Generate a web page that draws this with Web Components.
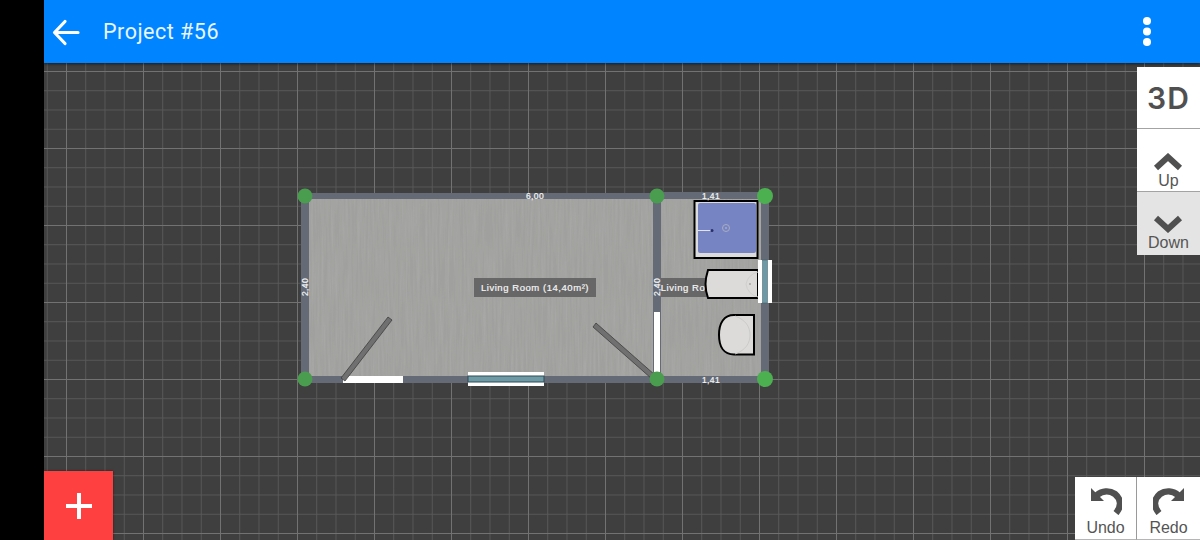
<!DOCTYPE html>
<html>
<head>
<meta charset="utf-8">
<title>Project #56</title>
<style>
html, body { margin: 0; height: 100%; background: #000; overflow: hidden; }
</style>
</head>
<body>
<app-shell>
    <top-bar slot="bar" title="Project #56"></top-bar>
    <plan-canvas>
        <floor-plan></floor-plan>
        <side-tools slot="side">
            <view-button></view-button>
            <tool-button label="Up" icon="up"></tool-button>
            <tool-button label="Down" icon="down" muted></tool-button>
        </side-tools>
        <history-tools slot="history">
            <tool-button label="Undo" icon="undo"></tool-button>
            <tool-button label="Redo" icon="redo"></tool-button>
        </history-tools>
        <add-button slot="add"></add-button>
    </plan-canvas>
</app-shell>

<script>
class AppShell extends HTMLElement {
    constructor() {
        super();
        this.attachShadow({ mode: 'open' }).innerHTML = `
            <style>
            :host {
                background: #000;
                display: grid;
                grid-template-columns: 44px 1fr;
                height: 540px;
                width: 1200px;
            }
            .main {
                display: flex;
                flex-direction: column;
                grid-column: 2;
                min-width: 0;
            }
            </style>
            <div class="main">
                <slot name="bar"></slot>
                <slot></slot>
            </div>
        `;
    }
}

class TopBar extends HTMLElement {
    constructor() {
        super();
        this.attachShadow({ mode: 'open' }).innerHTML = `
            <style>
            :host {
                align-items: center;
                background: #0084ff;
                box-shadow: 0 1px 3px #0009;
                color: #e8f5ff;
                display: flex;
                flex: none;
                font: 21.500px Roboto, sans-serif;
                height: 63px;
                letter-spacing: .5px;
                position: relative;
                z-index: 2;
            }
            .back { display: block; margin-left: 8px; }
            .title { flex: 1; margin-left: 23px; }
            .more { display: block; margin-right: 48px; }
            </style>
            <svg class="back" width="28" height="28" viewBox="0 0 28 28" fill="none" stroke="#fff" stroke-width="3.200" stroke-linecap="round" stroke-linejoin="round">
                <path d="M3 14.500H26M13 3.500L2.500 14.500L13 25.500"/>
            </svg>
            <span class="title"></span>
            <svg class="more" width="10" height="32" viewBox="0 0 10 32" fill="#fff">
                <circle cx="5" cy="5" r="4"/><circle cx="5" cy="15.500" r="4"/><circle cx="5" cy="26" r="4"/>
            </svg>
        `;
        this.shadowRoot.querySelector('.title').textContent = this.getAttribute('title');
    }
}

class PlanCanvas extends HTMLElement {
    constructor() {
        super();
        this.attachShadow({ mode: 'open' }).innerHTML = `
            <style>
            :host {
                background-color: #3f3f40;
                display: block;
                flex: 1;
                overflow: hidden;
                position: relative;
            }
            .grid {
                background-image:
                    linear-gradient(90deg, #727272 1.500px, transparent 1.500px),
                    linear-gradient(#727272 1.500px, transparent 1.500px),
                    linear-gradient(90deg, #595959 1.200px, transparent 1.200px),
                    linear-gradient(#595959 1.200px, transparent 1.200px);
                background-position: 22px 8px, 0 8px, 22px 0, 0 8px;
                background-size: 77px 77px, 77px 77px, 19.250px 19.250px, 19.250px 19.250px;
                filter: blur(.6px);
                inset: 0;
                position: absolute;
            }
            .side { position: absolute; right: 0; top: 4px; }
            .history { bottom: 0; position: absolute; right: 0; }
            .add { bottom: 0; left: 0; position: absolute; }
            </style>
            <div class="grid"></div>
            <slot></slot>
            <div class="side"><slot name="side"></slot></div>
            <div class="history"><slot name="history"></slot></div>
            <div class="add"><slot name="add"></slot></div>
        `;
    }
}

class FloorPlan extends HTMLElement {
    constructor() {
        super();
        this.attachShadow({ mode: 'open' }).innerHTML = `
            <style>
            :host { display: block; inset: 0; position: absolute; }
            svg { display: block; }
            text { fill: #f6f6f6; font-family: "Liberation Sans", sans-serif; text-anchor: middle; }
            .room { font-size: 9.500px; letter-spacing: .55px; stroke: #f6f6f6; stroke-width: .2; }
            .size { font-size: 8.500px; letter-spacing: .4px; stroke: #f6f6f6; stroke-width: .2; }
            .wall { fill: #646a76; }
            .open { fill: #fff; }
            .leaf { fill: #707070; stroke: #333; stroke-width: .7; }
            .ware { fill: #dcdbd9; stroke: #000; stroke-width: 2; }
            </style>
            <svg width="1156" height="477" viewBox="44 63 1156 477">
                <defs>
                    <filter id="wood" x="0" y="0" width="100%" height="100%">
                        <feTurbulence type="fractalNoise" baseFrequency="0.5 0.02" numOctaves="3" seed="7"/>
                        <feColorMatrix values="0 0 0 0 .45  0 0 0 0 .45  0 0 0 0 .45  .7 0 0 0 -.22"/>
                        <feComposite in2="SourceGraphic" operator="in" result="grain"/>
                        <feMerge><feMergeNode in="SourceGraphic"/><feMergeNode in="grain"/></feMerge>
                    </filter>
                </defs>

                <rect x="309" y="198" width="453" height="179" fill="#a0a09e" filter="url(#wood)"/>

                <rect class="wall" x="301" y="193" width="360" height="6"/>
                <rect class="wall" x="661" y="192" width="108" height="7"/>
                <rect class="wall" x="301" y="193" width="8" height="190"/>
                <rect class="wall" x="761" y="192" width="8" height="191"/>
                <rect class="wall" x="301" y="376" width="468" height="7"/>
                <rect class="wall" x="653" y="193" width="8" height="190"/>

                <rect class="open" x="343" y="376" width="60" height="7"/>
                <rect class="open" x="654" y="312" width="6" height="61"/>

                <rect x="474" y="278" width="122" height="19" fill="#676767"/>
                <text class="room" x="535" y="291">Living Room (14,40m²)</text>
                <rect x="661" y="278" width="46" height="19" fill="#676767"/>
                <text class="room" x="683" y="291">Living Ro</text>

                <path class="leaf" d="M341 378L388 317L392 320L345 381Z"/>
                <path class="leaf" d="M596 323L655 375L652 379L593 327Z"/>

                <g>
                    <rect x="468" y="372" width="76" height="14" fill="#fff"/>
                    <rect x="468" y="376" width="76" height="6" fill="#6e9aa5" stroke="#2c4a55" stroke-width="1"/>
                </g>

                <g>
                    <rect x="694.500" y="201" width="63" height="57" fill="#dcdcdc" stroke="#000" stroke-width="2"/>
                    <rect x="698" y="203" width="58" height="50" rx="2" fill="#7684c4"/>
                    <circle cx="726" cy="228" r="3.500" fill="none" stroke="#a9acc0" stroke-width="1"/>
                    <circle cx="726" cy="228" r="1" fill="#a9acc0"/>
                    <path d="M698 230.500H711" stroke="#dfe3f5" stroke-width="1"/>
                    <circle cx="712" cy="230.500" r="1.500" fill="#27306b"/>
                </g>

                <path class="ware" d="M758 270H708Q705.500 278 705.500 284Q705.500 291 708 298H758Z"/>
                <circle cx="750" cy="284" r="1" fill="#a8a8a8"/>
                <path d="M758 272A15 15 0 0 0 746 284A15 15 0 0 0 758 297" fill="none" stroke="#cfcfcd" stroke-width="1"/>

                <g>
                    <rect x="758" y="260" width="14" height="43" fill="#fff"/>
                    <rect x="762.500" y="260" width="5" height="43" fill="#6e9aa5" stroke="#3c5c66" stroke-width=".5"/>
                </g>

                <path class="ware" d="M754 315H734C724 315 719 323 719 335C719 347 724 354.500 734 354.500H754Z"/>
                <path d="M735 316C746 320 750 327 750 335C750 343 746 350 735 354" fill="none" stroke="#cbcbc9" stroke-width="1"/>

                <circle cx="305" cy="196" r="7.500" fill="#4a9c4e"/>
                <circle cx="657" cy="196" r="7.500" fill="#4a9c4e"/>
                <circle cx="765" cy="196" r="8" fill="#4caf50"/>
                <circle cx="305" cy="379" r="7.500" fill="#4a9c4e"/>
                <circle cx="657" cy="379" r="7.500" fill="#4a9c4e"/>
                <circle cx="765" cy="379" r="8" fill="#4caf50"/>

                <text class="size" x="535" y="199">6,00</text>
                <text class="size" x="711" y="199">1,41</text>
                <text class="size" x="711" y="383">1,41</text>
                <text class="size" transform="translate(308 287) rotate(-90)">2,40</text>
                <text class="size" transform="translate(660 287) rotate(-90)">2,40</text>
            </svg>
        `;
    }
}

class SideTools extends HTMLElement {
    constructor() {
        super();
        this.attachShadow({ mode: 'open' }).innerHTML = `
            <style>
            :host { display: flex; flex-direction: column; width: 63px; }
            </style>
            <slot></slot>
        `;
    }
}

class HistoryTools extends HTMLElement {
    constructor() {
        super();
        this.attachShadow({ mode: 'open' }).innerHTML = `
            <style>
            :host { display: flex; }
            ::slotted(:first-child) { border-right: 1px solid #9a9a9a; width: 62px; }
            </style>
            <slot></slot>
        `;
    }
}

class ViewButton extends HTMLElement {
    constructor() {
        super();
        this.attachShadow({ mode: 'open' }).innerHTML = `
            <style>
            :host {
                align-items: center;
                background: #fff;
                border-bottom: 1px solid #a3a3a3;
                color: #505050;
                display: flex;
                font: 600 30px Inter, sans-serif;
                height: 61px;
                justify-content: center;
                letter-spacing: 1px;
            }
            </style>
            3D
        `;
    }
}

const icons = {
    up: '<path d="M3 15L15 4L27 15" fill="none" stroke="#505050" stroke-width="6"/>',
    down: '<path d="M3 3L15 14L27 3" fill="none" stroke="#505050" stroke-width="6"/>',
    undo: '<path d="M1 1V14H14Z" fill="#505050"/><path d="M7 8C12 4 19 3 25 7C31 12 32 19 26 26" fill="none" stroke="#505050" stroke-width="6.500"/>',
    redo: '<path d="M31 1V14H18Z" fill="#505050"/><path d="M25 8C20 4 13 3 7 7C1 12 0 19 6 26" fill="none" stroke="#505050" stroke-width="6.500"/>',
};

class ToolButton extends HTMLElement {
    constructor() {
        super();
        const name = this.getAttribute('icon');
        const tall = name === 'undo' || name === 'redo';
        this.attachShadow({ mode: 'open' }).innerHTML = `
            <style>
            :host {
                align-items: center;
                background: #fff;
                box-sizing: border-box;
                color: #555;
                display: flex;
                flex-direction: column;
                font: 16px "Liberation Sans", sans-serif;
                height: 63px;
                justify-content: flex-end;
                width: 63px;
            }
            :host([muted]) { background: #e4e4e4; }
            :host([icon="up"]) { border-bottom: 1px solid #a3a3a3; }
            :host([icon="undo"]), :host([icon="redo"]) { border-bottom: 1px solid #b5b5b5; }
            svg { display: block; }
            span { line-height: 18px; margin-top: 1px; padding-bottom: 3px; }
            :host([icon="up"]) span { padding-bottom: 1px; }
            :host([icon="undo"]) span, :host([icon="redo"]) span { margin-top: 4px; padding-bottom: 2px; }
            </style>
            <svg width="32" height="${tall ? 28 : 18}" viewBox="0 0 32 ${tall ? 28 : 18}">${icons[name]}</svg>
            <span>${this.getAttribute('label')}</span>
        `;
    }
}

class AddButton extends HTMLElement {
    constructor() {
        super();
        this.attachShadow({ mode: 'open' }).innerHTML = `
            <style>
            :host {
                align-items: center;
                background: #ff4040;
                box-shadow: 0 0 2px #0008;
                display: flex;
                height: 69px;
                justify-content: center;
                width: 69px;
            }
            svg { display: block; }
            </style>
            <svg width="28" height="28" viewBox="0 0 28 28" fill="#fff">
                <path d="M12 1H16V12H27V16H16V27H12V16H1V12H12Z"/>
            </svg>
        `;
    }
}

customElements.define('app-shell', AppShell);
customElements.define('top-bar', TopBar);
customElements.define('plan-canvas', PlanCanvas);
customElements.define('floor-plan', FloorPlan);
customElements.define('side-tools', SideTools);
customElements.define('history-tools', HistoryTools);
customElements.define('view-button', ViewButton);
customElements.define('tool-button', ToolButton);
customElements.define('add-button', AddButton);
</script>
</body>
</html>
